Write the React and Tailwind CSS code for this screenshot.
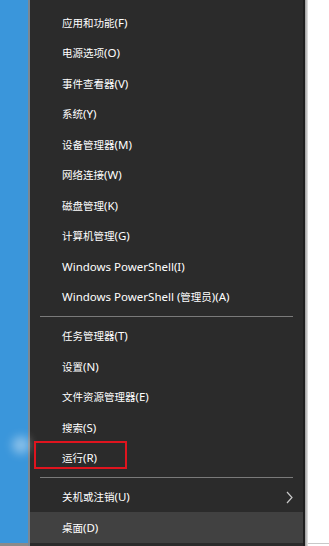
import React from "react";

const groups = [
  [
    "应用和功能(F)",
    "电源选项(O)",
    "事件查看器(V)",
    "系统(Y)",
    "设备管理器(M)",
    "网络连接(W)",
    "磁盘管理(K)",
    "计算机管理(G)",
    "Windows PowerShell(I)",
    "Windows PowerShell (管理员)(A)",
  ],
  ["任务管理器(T)", "设置(N)", "文件资源管理器(E)", "搜索(S)", "运行(R)"],
  ["关机或注销(U)", "桌面(D)"],
];

// CJK glyphs render a bit smaller than the latin ones in the original menu
function Label({ text }) {
  const parts = text.split(/([\u4e00-\u9fff]+)/).filter(Boolean);
  return (
    <span className="whitespace-pre text-[11.5px] text-white" style={{ fontFamily: '"Noto Sans", sans-serif' }}>
      {parts.map((p, i) =>
        /[\u4e00-\u9fff]/.test(p) ? (
          <span key={i} className="text-[10.5px]" style={{ fontFamily: '"Noto Sans CJK SC", sans-serif' }}>
            {p}
          </span>
        ) : (
          <span key={i}>{p}</span>
        )
      )}
    </span>
  );
}

function Item({ label }) {
  const boxed = label === "运行(R)";
  const hover = label === "桌面(D)";
  const sub = label === "关机或注销(U)";
  return (
    <div
      className={`relative flex h-[30.5px] items-center pl-[32px] pr-3 ${
        hover ? "bg-[#414141]" : ""
      }`}
    >
      <Label text={label} />
      {sub && (
        <svg className="absolute right-[10px] top-[9px]" width="7" height="13" viewBox="0 0 7 13">
          <path d="M1 1 L6 6.5 L1 12" fill="none" stroke="#c8c8c8" strokeWidth="1.2" />
        </svg>
      )}
      {boxed && (
        <div className="absolute left-[4px] top-[-2px] h-[28px] w-[93px] border-2 border-[#e0141e]" />
      )}
    </div>
  );
}

export default function App() {
  return (
    <div className="flex h-[546px] w-[329px] overflow-hidden bg-white">
      <div className="flex w-[28px] flex-col">
        <div className="relative h-[543px] bg-[#3a96db]">
          <div className="absolute left-[12px] top-[436px] h-[18px] w-[18px] rounded-full bg-white/40 blur-[5px]" />
        </div>
        <div className="flex-1 bg-[#8a8a8a]" />
      </div>
      <div className="w-[2px] bg-[#7b8894]" />
      <div className="flex w-[273px] flex-col bg-[#2b2b2b] pt-[7px]">
        {groups.map((g, gi) => (
          <div key={gi}>
            {gi > 0 && (
              <div className="flex h-[8.5px] items-center px-[10px]">
                <div className="h-px w-full bg-[#7a7a7a]" />
              </div>
            )}
            {g.map((l) => (
              <Item key={l} label={l} />
            ))}
          </div>
        ))}
      </div>
      <div className="w-[2px] bg-[#1e1e1e]" />
      <div className="w-[3px] bg-gradient-to-r from-[#9a9a9a] to-[#e8e8e8]" />
      <div className="flex flex-1 flex-col">
        <div className="h-[543px] bg-white" />
        <div className="h-px bg-[#c8c8c8]" />
      </div>
    </div>
  );
}
